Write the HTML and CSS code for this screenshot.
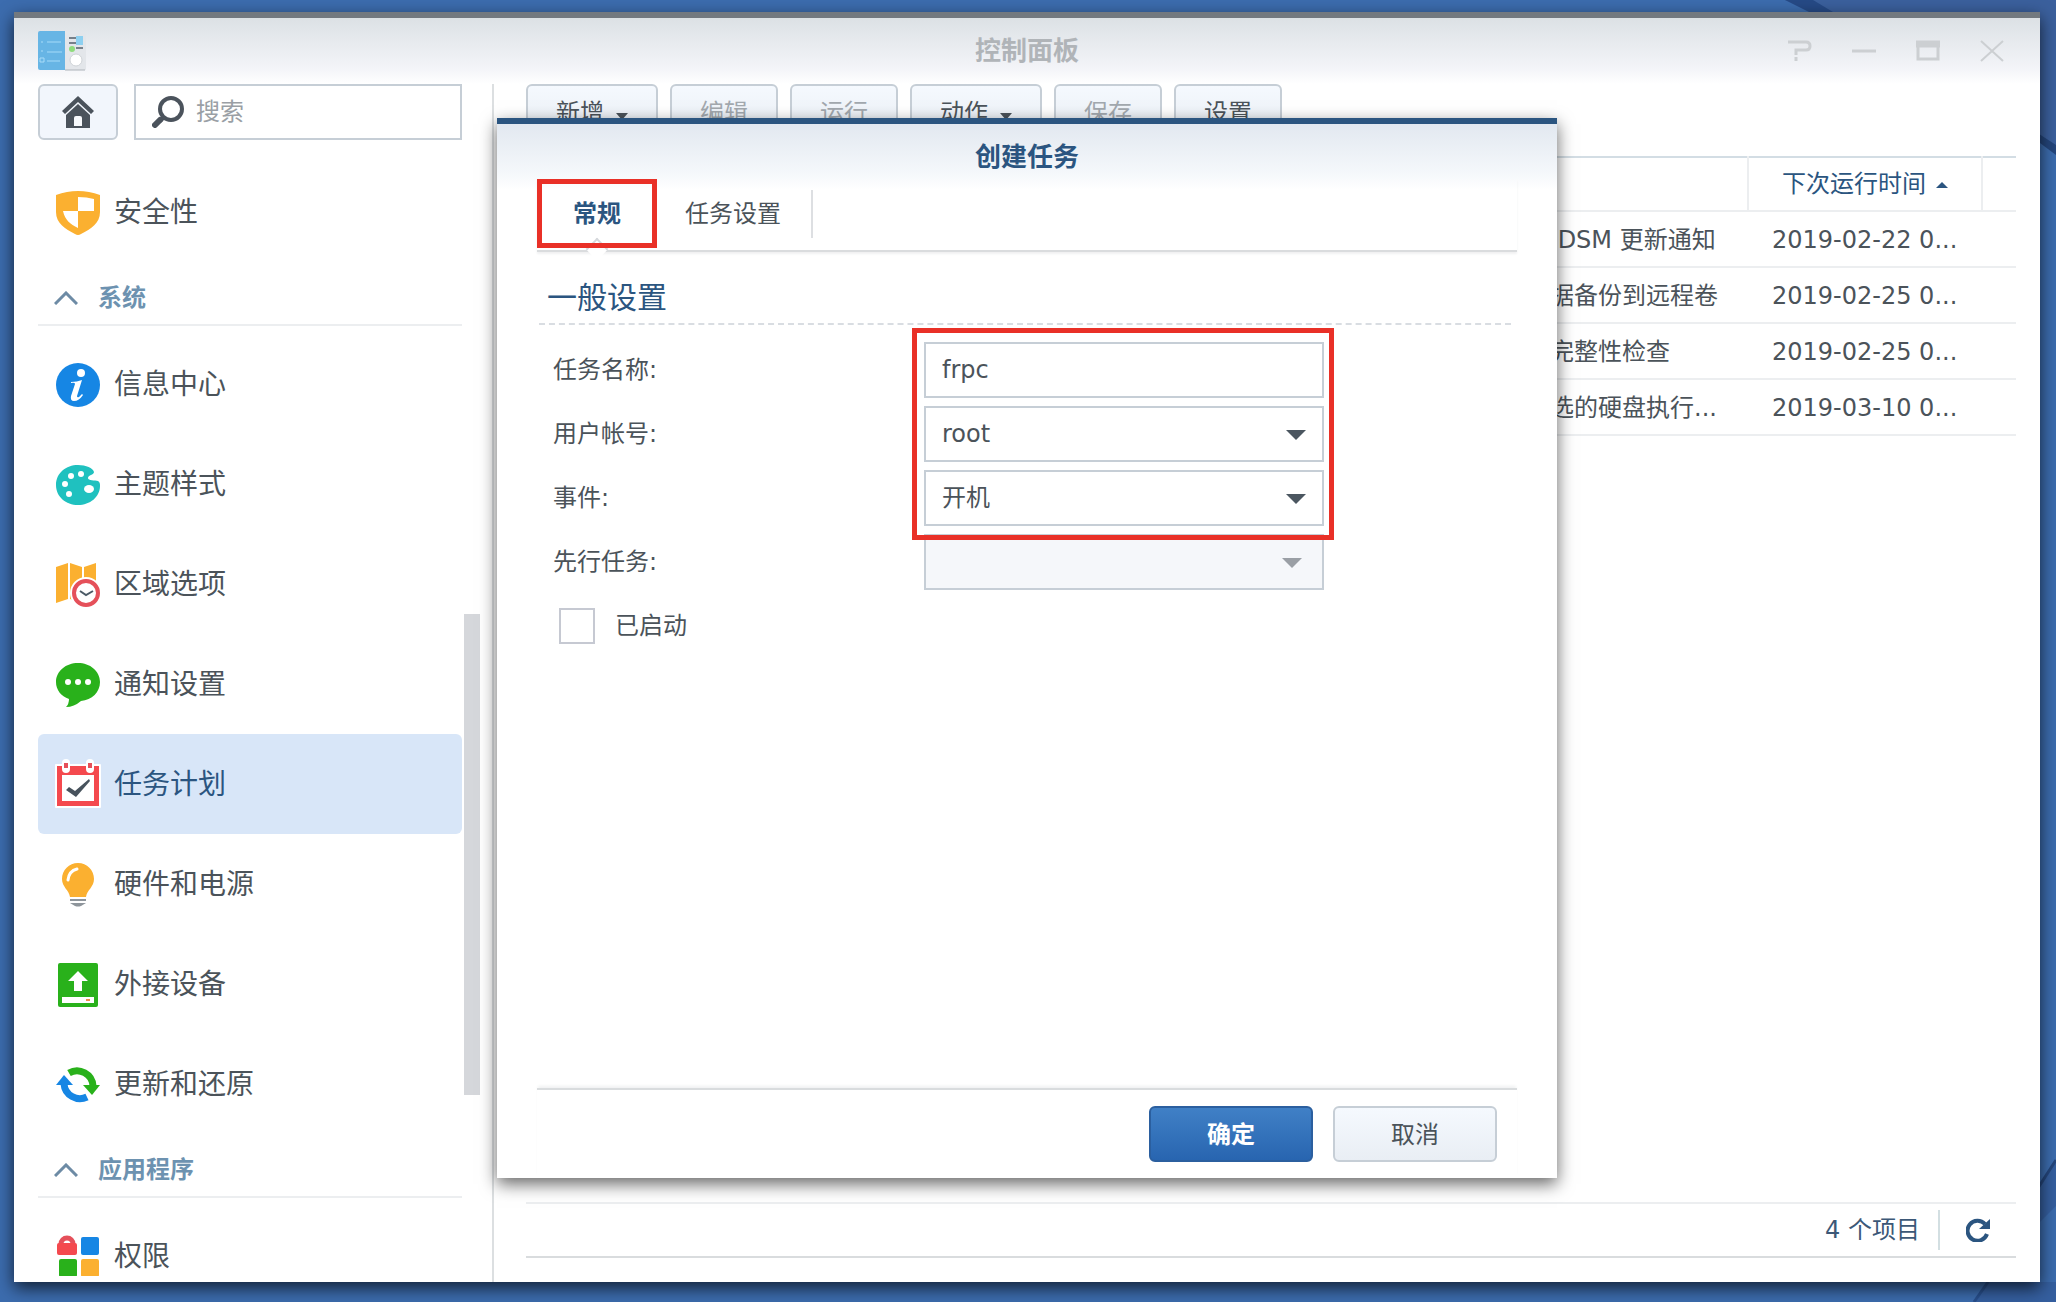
FILE: index.html
```
<!DOCTYPE html>
<html lang="zh-CN">
<head>
  <meta charset="utf-8">
  <title>控制面板</title>
  <meta name="viewport" content="width=device-width, initial-scale=1">
  <link rel="stylesheet" href="styles.css">
</head>
<body>
  <!-- Desktop wallpaper -->
  <svg class="wallpaper" viewBox="0 0 2056 1302" preserveAspectRatio="none" aria-hidden="true">
    <path d="M1785 0h271v150l-20-12V12h-210z" fill="#3b609d"/>
    <path d="M1785 0h28l20 12h-24z" fill="#264a86"/>
    <path d="M2036 132l20 13v10l-20-15z" fill="#24467c"/>
    <path d="M2056 1162l-20 30v34l20-20z" fill="#355f9f"/>
    <path d="M2056 1160l-18 28" stroke="#24467c" stroke-width="3"/>
    <path d="M1988 1282l-14 20h82v-20z" fill="#355f9f"/>
    <path d="M1988 1282l-14 20" stroke="#284f8c" stroke-width="3"/>
  </svg>

  <div class="window">
    <header class="titlebar">
      <svg class="app-icon" viewBox="0 0 48 40" aria-hidden="true">
        <path d="M26 2h20a2 2 0 0 1 2 2v34a1 1 0 0 1-1 1H26z" fill="#e3e6ea"/>
        <path d="M2 0h25v39H2a2 2 0 0 1-2-2V2a2 2 0 0 1 2-2z" fill="#67b5e5"/>
        <path d="M9 11h14M9 21h15M9 30h13" stroke="#86c8ef" stroke-width="2"/>
        <path d="M3 11h2M3 20h2M2 27h4v4H2z" stroke="#a9dcf8" fill="none"/>
        <path d="M31 7h7M31 12h7M38 17h7" stroke="#76808a" stroke-width="2"/>
        <path d="M38 5h7v9h-7z" fill="#8ed0f0"/>
        <circle cx="34" cy="18" r="3" fill="#8fdc7d"/>
        <circle cx="38" cy="29" r="6" fill="#fff" stroke="#cfd3d7"/>
        <path d="M27 39h20" stroke="#aeb4ba"/>
      </svg>
      <h1>控制面板</h1>
      <div class="controls">
        <button type="button" aria-label="帮助"><svg viewBox="0 0 24 22"><path d="M0 2h18q4 0 4 4t-4 4H8v5M8 17v4" stroke-width="3"/></svg></button>
        <button type="button" aria-label="最小化"><svg viewBox="0 0 24 22"><path d="M0 11h24" stroke-width="3"/></svg></button>
        <button type="button" aria-label="最大化"><svg viewBox="0 0 24 22"><path d="M2 1v18h20V1" stroke-width="3"/><path d="M0 4h24" stroke-width="7"/></svg></button>
        <button type="button" aria-label="关闭"><svg viewBox="0 0 24 22"><path d="M1 1l22 20M23 1L1 21" stroke-width="2"/></svg></button>
      </div>
    </header>

    <div class="content">
      <aside class="sidebar">
        <div class="search-row">
          <button type="button" class="btn home" aria-label="主页">
            <svg viewBox="0 0 32 32"><path d="M0 15L16 0l16 15-3 3L16 6 3 18z"/><path d="M4 19L16 8l12 11v13H4z"/><path class="door" d="M14 20h4q2 0 2 2v8h-8v-8q0-2 2-2z"/></svg>
          </button>
          <label class="search">
            <svg viewBox="0 0 32 32"><circle cx="19" cy="13" r="11"/><path class="joint" d="M12 21l-4 4"/><path class="handle" d="M8 24l-5 5"/></svg>
            <input type="text" placeholder="搜索" aria-label="搜索">
          </label>
        </div>

        <div class="side-body">
          <nav class="side-list">
            <a href="#" class="side-item">
              <svg viewBox="0 0 44 44"><path d="M0 4Q22-4 44 4v17c0 11-9 17-19 22q-3 2-6 0C9 38 0 32 0 21z" fill="#fbb030"/><path d="M22 6q9 0 16 2v12H22zM22 20v17C14 33 9 29 7 20z" fill="#fff"/></svg>
              安全性
            </a>
            <h2 class="side-group"><svg viewBox="0 0 24 14"><path d="M1 13L12 2l11 11"/></svg>系统</h2>
            <a href="#" class="side-item">
              <svg viewBox="0 0 44 44"><circle cx="22" cy="22" r="22" fill="#1686e4"/><circle cx="25" cy="10" r="4" fill="#fff"/><path d="M15 19q6 0 11-2l-5 16q0 2 2 1l3-3 1 1q-4 6-9 6-4 0-3-5l4-12q0-2-4-1z" fill="#fff"/></svg>
              信息中心
            </a>
            <a href="#" class="side-item">
              <svg viewBox="0 0 44 44"><path d="M22 2c8 0 15 3 16 7 0 3-6 3-6 6s7 2 10 3c2 1 2 3 2 5 0 11-10 19-22 19S0 34 0 22 10 2 22 2z" fill="#1fc1bf"/><g fill="#fff"><circle cx="25" cy="11" r="3"/><circle cx="15" cy="13" r="3"/><circle cx="9" cy="21" r="3"/><circle cx="13" cy="31" r="3"/><ellipse cx="33" cy="26" rx="5" ry="4"/></g></svg>
              主题样式
            </a>
            <a href="#" class="side-item">
              <svg viewBox="0 0 44 44"><path d="M0 4l12-4v36L0 40zM14 0l12 4v36l-12-4zM28 4l12-4v36l-12 4z" fill="#fbb030"/><circle cx="30" cy="30" r="16" fill="#fff"/><circle cx="30" cy="30" r="12" fill="#fff" stroke="#e5505a" stroke-width="4"/><path d="M24 28l6 4 7-4" fill="none" stroke="#4b5a66" stroke-width="2"/></svg>
              区域选项
            </a>
            <a href="#" class="side-item">
              <svg viewBox="0 0 44 44"><path d="M22 0c12 0 22 8 22 19 0 10-8 18-19 19q-7 6-15 6 3-3 3-8C5 33 0 27 0 19 0 8 10 0 22 0z" fill="#29b11b"/><g fill="#fff"><circle cx="12" cy="19" r="3"/><circle cx="22" cy="19" r="3"/><circle cx="32" cy="19" r="3"/></g></svg>
              通知设置
            </a>
            <a href="#" class="side-item active">
              <svg viewBox="0 0 44 44"><path d="M0 2h44v42H0z" fill="#f4494e" stroke="#fff" stroke-width="2" stroke-linejoin="round"/><path d="M6 12h32v26H6z" fill="#fff"/><path d="M10 0v6M34 0v6" stroke="#fff" stroke-width="8" stroke-linecap="round"/><path d="M10 0v5M34 0v5" stroke="#e5505a" stroke-width="4"/><path d="M10 27l3-3 6 4 14-12 1 2-14 16z" fill="#47525c"/></svg>
              任务计划
            </a>
            <a href="#" class="side-item">
              <svg viewBox="0 0 44 44"><path d="M22 0c9 0 16 7 16 16 0 8-7 11-8 18H14C13 27 6 24 6 16 6 7 13 0 22 0z" fill="#fbb030"/><path d="M12 17q1-9 9-11" fill="none" stroke="#fff" stroke-width="3" stroke-linecap="round"/><path d="M14 36h16v2H14zM14 40h16l-5 3q-3 1-6 0z" fill="#8e959b"/></svg>
              硬件和电源
            </a>
            <a href="#" class="side-item">
              <svg viewBox="0 0 44 44"><rect x="2" width="40" height="44" rx="2" fill="#29b11b"/><path d="M22 8l10 10h-6v10h-8V18h-6zM6 34h32v6H6z" fill="#fff"/><path d="M30 37h4" stroke="#f08a4b" stroke-width="2"/></svg>
              外接设备
            </a>
            <a href="#" class="side-item">
              <svg viewBox="0 0 44 44"><path d="M13 10A16 16 0 0 1 37 23" fill="none" stroke="#29b11b" stroke-width="7"/><path d="M27 22h17L36 32z" fill="#29b11b"/><path d="M31 34A16 16 0 0 1 8 21" fill="none" stroke="#1686e4" stroke-width="7"/><path d="M0 22h17L8 12z" fill="#1686e4"/></svg>
              更新和还原
            </a>
            <h2 class="side-group"><svg viewBox="0 0 24 14"><path d="M1 13L12 2l11 11"/></svg>应用程序</h2>
            <a href="#" class="side-item">
              <svg viewBox="0 0 44 44"><path d="M5 9a6 6 0 0 1 12 0" fill="none" stroke="#e5505a" stroke-width="5"/><rect x="1" y="8" width="20" height="12" rx="2" fill="#f4494e"/><rect x="25" y="2" width="18" height="18" rx="2" fill="#1686e4"/><rect x="3" y="24" width="18" height="18" rx="2" fill="#29b11b"/><rect x="25" y="24" width="18" height="18" rx="2" fill="#fbb030"/></svg>
              权限
            </a>
          </nav>
          <div class="scrollbar"><div class="thumb"></div></div>
        </div>
      </aside>

      <main class="main">
        <div class="toolbar">
          <button type="button" class="btn menu">新增<span class="caret"></span></button>
          <button type="button" class="btn" disabled>编辑</button>
          <button type="button" class="btn" disabled>运行</button>
          <button type="button" class="btn menu">动作<span class="caret"></span></button>
          <button type="button" class="btn" disabled>保存</button>
          <button type="button" class="btn">设置</button>
        </div>

        <div class="table-wrap">
          <table class="tasks">
            <colgroup><col><col class="col-action"><col class="col-time"><col class="col-end"></colgroup>
            <thead>
              <tr><th></th><th></th><th class="sorted">下次运行时间<span class="sort-up"></span></th><th></th></tr>
            </thead>
            <tbody>
              <tr><td></td><td>&nbsp;DSM 更新通知</td><td>2019-02-22 0...</td><td></td></tr>
              <tr><td></td><td>据备份到远程卷</td><td>2019-02-25 0...</td><td></td></tr>
              <tr><td></td><td>完整性检查</td><td>2019-02-25 0...</td><td></td></tr>
              <tr><td></td><td>选的硬盘执行...</td><td>2019-03-10 0...</td><td></td></tr>
            </tbody>
          </table>
        </div>

        <footer class="statusbar">
          <span class="count">4 个项目</span>
          <button type="button" class="refresh" aria-label="刷新">
            <svg viewBox="0 0 24 24"><path d="M21 16A10 10 0 1 1 19 6" fill="none" stroke="#2b5580" stroke-width="4"/><path d="M24 1v10H13z" fill="#2b5580"/></svg>
          </button>
        </footer>
      </main>
    </div>

    <!-- Create task dialog -->
    <section class="dialog" role="dialog" aria-labelledby="dialogTitle">
      <h2 class="dialog-title" id="dialogTitle">创建任务</h2>
      <div class="tabs">
        <button type="button" class="tab active">常规</button>
        <button type="button" class="tab">任务设置</button>
      </div>
      <form class="dialog-form">
        <h3>一般设置</h3>
        <div class="fields">
          <label for="taskName">任务名称:</label>
          <input type="text" class="field" id="taskName" value="frpc">
          <label for="user">用户帐号:</label>
          <div class="select"><select class="field" id="user"><option>root</option></select></div>
          <label for="event">事件:</label>
          <div class="select"><select class="field" id="event"><option>开机</option></select></div>
          <label for="preTask">先行任务:</label>
          <div class="select disabled"><select class="field" id="preTask" disabled><option></option></select></div>
          <div class="check">
            <input type="checkbox" id="enabled">
            <label for="enabled">已启动</label>
          </div>
          <div class="mark"></div>
        </div>
      </form>
      <div class="dialog-footer">
        <button type="button" class="btn primary">确定</button>
        <button type="button" class="btn">取消</button>
      </div>
    </section>
  </div>
</body>
</html>
```
FILE: styles.css
```
* {
  box-sizing: border-box;
}
body {
  margin: 0;
  height: 100vh;
  padding: 12px 16px 20px 14px;
  overflow: hidden;
  background: #3c6cae;
  color: #4b535a;
  font-family: "DejaVu Sans", "Noto Sans CJK SC", sans-serif;
  font-size: 24px;
  line-height: 40px;
}
h1, h2, h3 {
  margin: 0;
}
button, input, select {
  font: inherit;
  color: inherit;
}
button {
  padding: 0;
  border: none;
  background: none;
  cursor: pointer;
}
.wallpaper {
  position: absolute;
  top: 0;
  left: 0;
  width: 100%;
  height: 100%;
}

/* Window */
.window {
  position: relative;
  display: flex;
  flex-direction: column;
  height: 100%;
  border-top: 6px solid #73797f;
  background: #fff linear-gradient(#dce1e5, #f3f4f8 50px, #fff 66px) no-repeat;
  box-shadow: 0 6px 16px rgba(0, 0, 0, 0.7);
}
.titlebar {
  display: grid;
  grid-template-columns: 1fr auto 1fr;
  align-items: center;
  height: 66px;
  padding: 0 24px;
}
.app-icon {
  width: 48px;
  height: 40px;
}
.titlebar h1 {
  font-size: 26px;
  color: #b0b4b8;
}
.controls {
  display: flex;
  justify-content: flex-end;
  gap: 40px;
  padding-right: 12px;
}
.controls button {
  height: 22px;
}
.controls svg {
  display: block;
  width: 24px;
  height: 22px;
  fill: none;
  stroke: #cccfd2;
}
.content {
  display: flex;
  flex: 1;
  min-height: 0;
}

/* Buttons */
.btn {
  display: flex;
  align-items: center;
  justify-content: center;
  width: 108px;
  height: 56px;
  padding-top: 2px;
  border: 2px solid #c6ced6;
  border-radius: 6px;
  background: linear-gradient(#f5f9fe, #e9eef4);
}
.btn:disabled {
  color: #a2a8ae;
  cursor: default;
}
.btn.menu {
  width: 132px;
  gap: 12px;
}
.btn.primary {
  border-color: #2b5f9f;
  background: linear-gradient(#4080c6, #2865b0);
  color: #fff;
  font-weight: bold;
}
.caret {
  margin-top: 6px;
  border: 6px solid transparent;
  border-top: 7px solid #4b535a;
  border-bottom: none;
}

/* Sidebar */
.sidebar {
  display: flex;
  flex-direction: column;
  width: 480px;
  padding-left: 24px;
  border-right: 2px solid #dcdfe1;
}
.search-row {
  display: flex;
  gap: 16px;
  margin-right: 30px;
}
.btn.home {
  width: 80px;
  padding: 0;
  background: #f2f6fc;
}
.home svg {
  width: 32px;
  height: 32px;
  fill: #4b535c;
}
.home .door {
  fill: #f8fafd;
}
.search {
  display: flex;
  flex: 1;
  align-items: center;
  gap: 12px;
  padding-left: 16px;
  border: 2px solid #c6ced6;
}
.search svg {
  flex: none;
  width: 32px;
  height: 32px;
  fill: none;
  stroke: #4b535c;
  stroke-width: 4;
}
.search .handle {
  stroke-width: 6;
  stroke-linecap: round;
}
.search input {
  width: 100%;
  min-width: 0;
  padding: 0;
  border: none;
  outline: none;
}
.search input::placeholder {
  color: #9a9fa5;
}
.side-body {
  display: flex;
  flex: 1;
  gap: 2px;
  min-height: 0;
  margin: 22px 12px 6px 0;
}
.side-list {
  flex: 1;
  overflow: hidden;
}
.side-item {
  display: flex;
  align-items: center;
  gap: 14px;
  height: 100px;
  padding: 2px 0 0 18px;
  border-radius: 6px;
  color: inherit;
  font-size: 28px;
  text-decoration: none;
}
.side-item svg {
  width: 44px;
  height: 44px;
  overflow: visible;
}
.side-item.active {
  background: #d8e6f8;
  color: #2b5580;
}
.side-group {
  display: flex;
  align-items: center;
  gap: 20px;
  height: 64px;
  margin-bottom: 8px;
  padding: 10px 0 0 16px;
  border-bottom: 2px solid #eceef0;
  color: #6d92b0;
  font-size: 24px;
}
.side-group svg {
  width: 24px;
  height: 14px;
  fill: none;
  stroke: #6d8ba5;
  stroke-width: 3;
}
.scrollbar {
  display: flex;
  flex-direction: column;
  width: 16px;
}
.scrollbar::before {
  content: "";
  flex: 45;
}
.scrollbar::after {
  content: "";
  flex: 18;
}
.thumb {
  flex: 48;
  background: #d5d7db;
}

/* Task list */
.main {
  display: flex;
  flex: 1;
  flex-direction: column;
  min-width: 0;
  padding: 0 24px 24px 32px;
}
.toolbar {
  display: flex;
  gap: 12px;
  margin-bottom: 16px;
}
.table-wrap {
  flex: 1;
}
.tasks {
  width: 100%;
  table-layout: fixed;
  border-collapse: collapse;
  border-top: 2px solid #d3dde4;
}
.col-action {
  width: 222px;
}
.col-time {
  width: 234px;
}
.col-end {
  width: 34px;
}
.tasks th, .tasks td {
  height: 56px;
  padding: 0;
  border-bottom: 2px solid #eceef0;
  text-align: left;
  white-space: nowrap;
}
.tasks td {
  padding: 2px 0 0 24px;
}
.tasks td:first-child, .tasks td:last-child {
  padding: 0;
}
.tasks th {
  height: 54px;
  font-weight: normal;
  color: #2b5580;
}
.tasks th.sorted {
  border-right: 2px solid #eceef0;
  border-left: 2px solid #eceef0;
  text-align: center;
}
.sort-up {
  display: inline-block;
  margin-left: 10px;
  vertical-align: middle;
  border: 6px solid transparent;
  border-top: none;
  border-bottom-color: #2b5580;
}
.statusbar {
  display: flex;
  align-items: center;
  justify-content: flex-end;
  height: 56px;
  border-top: 2px solid #eceef0;
  border-bottom: 2px solid #d9dcde;
  color: #3c5877;
}
.count {
  padding-right: 18px;
  border-right: 2px solid #d3dfe2;
}
.refresh {
  padding: 0 26px;
}
.refresh svg {
  display: block;
  width: 24px;
  height: 24px;
}

/* Dialog */
.dialog {
  position: absolute;
  top: 100px;
  bottom: 104px;
  left: 50%;
  display: flex;
  flex-direction: column;
  width: 1060px;
  transform: translateX(-50%);
  padding: 0 40px;
  border-top: 6px solid #2b5580;
  background: #fff linear-gradient(#e2e8f0, #f5f8fb 50px, #fff 66px) no-repeat;
  box-shadow: 0 6px 16px rgba(0, 0, 0, 0.6);
}
.dialog-title {
  padding: 13px 0 2px;
  color: #2b5580;
  font-size: 26px;
  text-align: center;
}
.tabs {
  position: relative;
  display: flex;
  height: 73px;
  padding-bottom: 2px;
  border-bottom: 2px solid #dadcde;
  box-shadow: 0 2px 2px #f0f1f2;
}
/* notch under the active tab */
.tabs::before {
  content: "";
  position: absolute;
  top: 62px;
  left: 52px;
  width: 14px;
  height: 14px;
  border: solid #d5d8dc;
  border-width: 2px 0 0 2px;
  background: #fff;
  transform: rotate(45deg);
}
.tab {
  position: relative;
  padding: 0 32px 0 28px;
}
.tab:last-child::after {
  content: "";
  position: absolute;
  top: 11px;
  right: 0;
  height: 48px;
  border-right: 2px solid #dddfe2;
}
.tab.active {
  width: 120px;
  padding: 0;
  border: 5px solid #e93027;
  color: #2b5580;
  font-weight: bold;
}
.dialog-form {
  flex: 1;
}
.dialog-form h3 {
  margin: 0 6px 17px 2px;
  padding: 26px 0 5px 8px;
  border-bottom: 2px dashed #d9dde2;
  color: #2b5580;
  font-size: 30px;
  font-weight: normal;
}
.fields {
  position: relative;
  display: grid;
  grid-template-columns: 371px 400px;
  grid-auto-rows: 56px;
  gap: 8px 0;
  align-items: center;
  padding-left: 16px;
}
.field {
  display: block;
  width: 100%;
  height: 56px;
  padding: 0 16px;
  border: 2px solid #c6ced6;
  border-radius: 0;
  background: #fff;
  appearance: none;
}
.field:disabled {
  background: #f5f7fa;
  opacity: 1;
}
.select {
  position: relative;
}
.select::after {
  content: "";
  position: absolute;
  top: 24px;
  right: 18px;
  border: 10px solid transparent;
  border-top-color: #4b5660;
  border-bottom: none;
  pointer-events: none;
}
.select.disabled::after {
  right: 22px;
  border-top-color: #9a9fa5;
}
.check {
  grid-column: 1 / 3;
  display: flex;
  align-items: center;
  gap: 20px;
  padding-left: 6px;
}
.check input {
  width: 36px;
  height: 36px;
  margin: 0;
  border: 2px solid #c6c9d2;
  background: #fff;
  appearance: none;
}
/* red frame over the first three fields */
.mark {
  position: absolute;
  top: -14px;
  left: 375px;
  width: 422px;
  height: 212px;
  border: 5px solid #e93027;
  pointer-events: none;
}
.dialog-footer {
  display: flex;
  justify-content: flex-end;
  gap: 20px;
  padding: 16px 20px;
  border-top: 2px solid #d9dcde;
  box-shadow: 0 -3px 3px -1px #f0f1f2;
}
.dialog-footer .btn {
  width: 164px;
}
```
